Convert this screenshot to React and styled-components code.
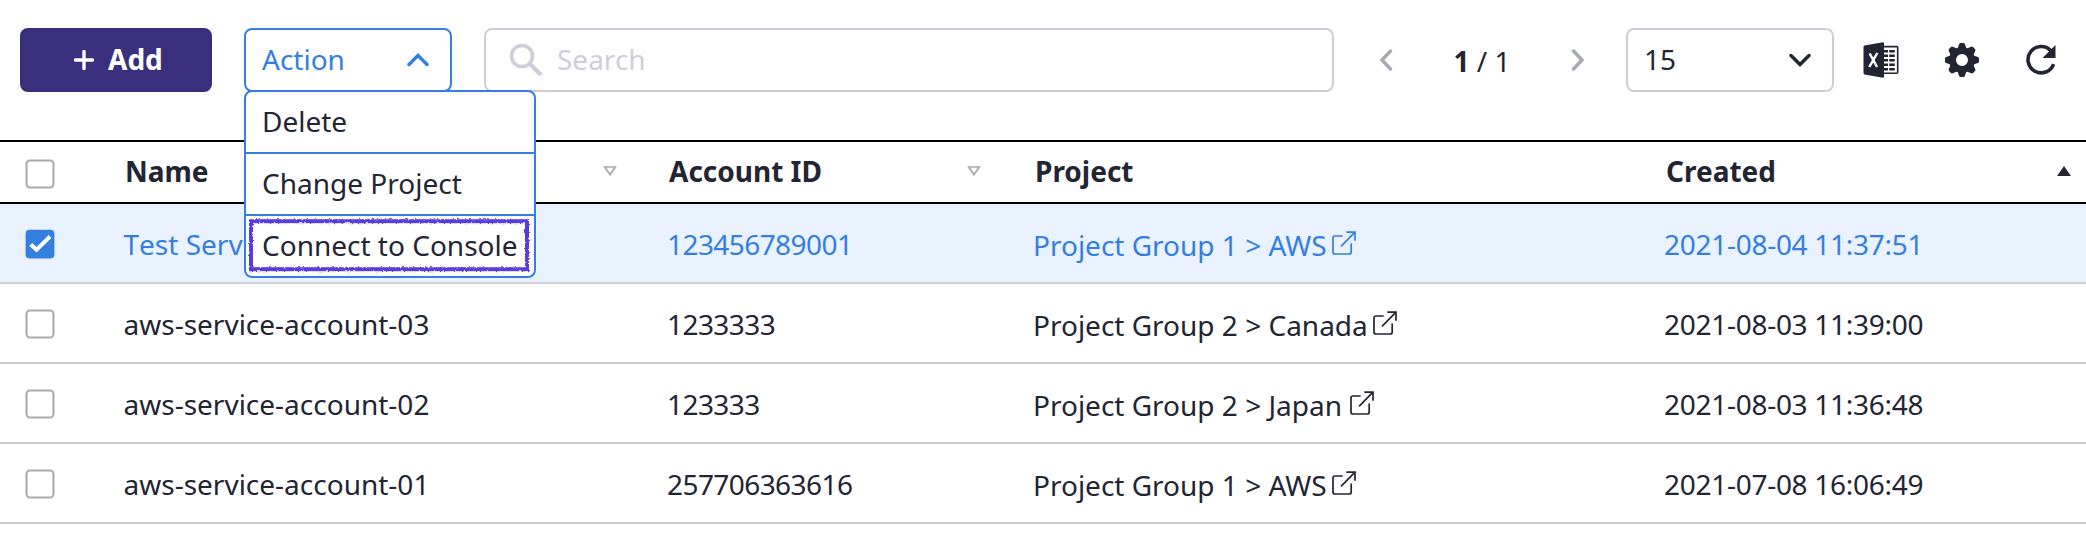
import React from 'react';
import styled, { createGlobalStyle } from 'styled-components';

const GlobalStyle = createGlobalStyle`
  * { box-sizing: border-box; }
  body { margin: 0; background: #fff; }
`;

const Page = styled.div`
  height: 548px;
  overflow: hidden;
  background: #fff;
  color: #232533;
  font: 400 28px/40px 'Noto Sans', sans-serif;
`;

const Toolbar = styled.div`
  height: 140px;
  display: flex;
  align-items: flex-start;
  padding: 28px 29px 0 20px;
`;

const AddButton = styled.button`
  width: 192px;
  height: 64px;
  border: 0;
  border-radius: 8px;
  background: #3a2f7d;
  color: #fff;
  font: 700 28px/40px 'Noto Sans', sans-serif;
  display: flex;
  align-items: center;
  padding: 0 0 2px 54px;
  gap: 14px;
  svg { position: relative; top: 1px; }
`;

const Dropdown = styled.div`
  position: relative;
  margin-left: 32px;
`;

const Field = styled.div`
  width: ${(p) => p.$width}px;
  height: 64px;
  border: 2px solid ${(p) => (p.$open ? '#347fe0' : '#cfced8')};
  border-radius: 8px;
  background: #fff;
  color: ${(p) => (p.$open ? '#347fe0' : '#232533')};
  display: flex;
  align-items: center;
  justify-content: space-between;
  padding: 0 21px 2px 16px;
  svg { position: relative; top: 1px; }
`;

const Menu = styled.ul`
  position: absolute;
  z-index: 2;
  top: 62px;
  left: 0;
  width: 292px;
  height: 188px;
  margin: 0;
  padding: 0;
  list-style: none;
  background: #fff;
  border: 2px solid #347fe0;
  border-radius: 8px;
  color: #232533;
`;

const MenuItem = styled.li`
  position: relative;
  height: 60px;
  padding: 9px 0 0 16px;
  white-space: nowrap;
  & + & {
    height: 62px;
    border-top: 2px solid #347fe0;
  }
`;

const Scribble = styled.svg`
  position: absolute;
  left: 2px;
  top: 2px;
`;

const SearchBox = styled.div`
  width: 850px;
  height: 64px;
  margin-left: 32px;
  border: 2px solid #cfced8;
  border-radius: 8px;
  color: #cfced8;
  display: flex;
  align-items: center;
  gap: 14px;
  padding: 0 0 2px 23px;
  svg { position: relative; top: 1px; }
`;

const Pager = styled.div`
  height: 64px;
  width: 206px;
  margin: 0 41px 0 45px;
  display: flex;
  align-items: center;
  justify-content: space-between;
  color: #a6a9b2;
`;

const PageCount = styled.span`
  color: #232533;
  padding-top: 2px;
`;

const Tools = styled.div`
  height: 64px;
  flex: 1;
  display: flex;
  align-items: center;
  justify-content: space-between;
  padding-left: 29px;
`;

const columns = '123px 544px 366px 631px 1fr';

const HeadRow = styled.div`
  display: grid;
  grid-template-columns: ${columns};
  height: 64px;
  border-top: 2px solid #000;
  border-bottom: 2px solid #000;
  font-weight: 700;
`;

const HeadCell = styled.div`
  display: flex;
  align-items: center;
  justify-content: space-between;
  padding: 0 ${(p) => p.$right}px 2px 2px;
`;

const BodyRow = styled.div`
  display: grid;
  grid-template-columns: ${columns};
  height: 80px;
  border-bottom: 2px solid #cfced8;
  background: ${(p) => (p.$selected ? '#eaf2ff' : '#fff')};
  color: ${(p) => (p.$selected ? '#347fe0' : '#232533')};
`;

const Cell = styled.div`
  display: flex;
  align-items: center;
  padding-top: ${(p) => (p.$low ? 4 : 2)}px;
  letter-spacing: ${(p) => p.$tracking || 0}px;
  white-space: pre;
`;

const NameCell = styled(Cell)`
  padding-left: 0.5px;
  font-kerning: none;
`;

const CheckCell = styled.div`
  display: flex;
  align-items: center;
  padding: ${(p) => p.$top}px 0 0 25px;
`;

function Checkbox({ checked }) {
  return (
    <svg width="30" height="30" viewBox="0 0 30 30" fill="none">
      {checked ? (
        <>
          <rect x=".6" y=".8" width="28.8" height="28.8" rx="4" fill="#347fe0" />
          <path d="M5.8 15.5 11.5 20.8 25 7.5" stroke="#fff" strokeWidth="4" />
        </>
      ) : (
        <rect x="1.5" y="1.5" width="27" height="27" rx="3.5" stroke="#a6a9b2" strokeWidth="2" fill="#fff" />
      )}
    </svg>
  );
}

function Chevron({ direction }) {
  const shape = {
    up: [22, 14, 'M2 11.5 11 2.5 20 11.5'],
    down: [22, 14, 'M2 2.5 11 11.5 20 2.5'],
    left: [14, 22, 'M11.5 2 3 11 11.5 20'],
    right: [14, 22, 'M2.5 2 11 11 2.5 20'],
  }[direction];
  return (
    <svg width={shape[0]} height={shape[1]} fill="none">
      <path d={shape[2]} stroke="currentColor" strokeWidth="3.4" strokeLinecap="round" />
    </svg>
  );
}

function SortIcon({ active }) {
  return active ? (
    <svg width="14" height="10"><path d="M7 0 14 10H0Z" fill="#232533" /></svg>
  ) : (
    <svg width="14" height="10" fill="none"><path d="M1.6 1H12.4L7 8.6Z" stroke="#a6a9b2" strokeWidth="1.7" /></svg>
  );
}

const LinkSvg = styled.svg`
  position: relative;
  top: -2px;
  margin-left: ${(p) => p.$gap}px;
`;

function ExternalLink({ gap = 5.5 }) {
  return (
    <LinkSvg $gap={gap} width="24" height="24" fill="none" stroke="currentColor" strokeWidth="1.7">
      <path d="M10 5H3Q1 5 1 7V21Q1 23 3 23H17.2Q19.2 23 19.2 21V13" strokeLinecap="round" />
      <path d="M14.3 1.2H23V9.8M23 1.2 9 15.4" />
    </LinkSvg>
  );
}

function Outline() {
  return (
    <Scribble width="282" height="56" fill="none">
      <defs>
        <filter id="rough" x="-2%" y="-8%" width="104%" height="116%">
          <feTurbulence type="fractalNoise" baseFrequency="0.5" numOctaves="2" seed="4" />
          <feDisplacementMap in="SourceGraphic" scale="3" xChannelSelector="R" yChannelSelector="G" />
        </filter>
      </defs>
      <rect x="3" y="3.2" width="276" height="48" stroke="#5a3be0" strokeWidth="4" filter="url(#rough)" />
    </Scribble>
  );
}

function ExcelIcon() {
  return (
    <svg width="36" height="36" viewBox="0 0 36 36" fill="none">
      <rect x="20" y="4.6" width="14.7" height="26.6" rx="1" stroke="#232533" strokeWidth="1.6" />
      <path d="M21 9.2h4M21 13.8h4M21 18.2h4M21 22.8h4M21 27.2h4M26.2 9.2h5.6M26.2 13.8h5.6M26.2 18.2h5.6M26.2 22.8h5.6M26.2 27.2h5.6" stroke="#232533" strokeWidth="2.6" />
      <path d="M1.5 3.6 20 .3Q21 .3 21 1.3V34.7Q21 35.7 20 35.7L1.5 32.4Q.5 32 .5 31V5Q.5 4 1.5 3.6Z" fill="#232533" />
      <path d="M6.7 11.5 14 25M14.3 11 6.3 25" stroke="#fff" strokeWidth="2.5" />
    </svg>
  );
}

function GearIcon() {
  const teeth = [0, 45, 90, 135, 180, 225, 270, 315];
  return (
    <svg width="34" height="34" viewBox="-17 -17 34 34" fill="#232533">
      <circle r="9.4" fill="none" stroke="#232533" strokeWidth="6.8" />
      {teeth.map((a) => (
        <path key={a} d="M-4.8 -11 -2.9 -15.8Q-2.4 -17 -1.4 -17H1.4Q2.4 -17 2.9 -15.8L4.8 -11Z" transform={`rotate(${a})`} />
      ))}
    </svg>
  );
}

function RefreshIcon() {
  return (
    <svg width="32" height="32" viewBox="0 0 32 32" fill="none">
      <path d="M28.6 20.2A13.2 13.2 0 1 1 25.6 6.4" stroke="#232533" strokeWidth="3.6" />
      <path d="M30.5 1V14H17.5Z" fill="#232533" />
    </svg>
  );
}

const rows = [
  { name: 'Test Servi', account: '123456789001', project: 'Project Group 1 > AWS', created: '2021-08-04 11:37:51', selected: true },
  { name: 'aws-service-account-03', account: '1233333', project: 'Project Group 2 > Canada', created: '2021-08-03 11:39:00' },
  { name: 'aws-service-account-02', account: '123333', project: 'Project Group 2 > Japan', created: '2021-08-03 11:36:48', gap: 7.5 },
  { name: 'aws-service-account-01', account: '257706363616', project: 'Project Group 1 > AWS', created: '2021-07-08 16:06:49' },
];

export default function App() {
  return (
    <Page>
      <GlobalStyle />
      <Toolbar>
        <AddButton>
          <svg width="20" height="20"><path d="M10 1.5V18.5M1.5 10H18.5" stroke="#fff" strokeWidth="3.4" strokeLinecap="round" /></svg>
          Add
        </AddButton>
        <Dropdown>
          <Field $width={208} $open>
            Action
            <Chevron direction="up" />
          </Field>
          <Menu>
            <MenuItem>Delete</MenuItem>
            <MenuItem>Change Project</MenuItem>
            <MenuItem><Outline />Connect to Console</MenuItem>
          </Menu>
        </Dropdown>
        <SearchBox>
          <svg width="34" height="34" fill="none" stroke="#cfced8">
            <circle cx="13" cy="13" r="10.5" strokeWidth="3.6" />
            <path d="M20.5 20.5 32 32" strokeWidth="4.2" />
          </svg>
          Search
        </SearchBox>
        <Pager>
          <Chevron direction="left" />
          <PageCount><b>1</b> / 1</PageCount>
          <Chevron direction="right" />
        </Pager>
        <Field $width={208}>
          15
          <Chevron direction="down" />
        </Field>
        <Tools>
          <ExcelIcon />
          <GearIcon />
          <RefreshIcon />
        </Tools>
      </Toolbar>
      <HeadRow>
        <CheckCell $top={4}><Checkbox /></CheckCell>
        <HeadCell $right={50}>Name<SortIcon /></HeadCell>
        <HeadCell $right={52}>Account ID<SortIcon /></HeadCell>
        <HeadCell $right={0}>Project</HeadCell>
        <HeadCell $right={15}>Created<SortIcon active /></HeadCell>
      </HeadRow>
      {rows.map(({ name, account, project, created, selected, gap }) => (
        <BodyRow key={name} $selected={selected}>
          <CheckCell $top={2}><Checkbox checked={selected} /></CheckCell>
          <NameCell>{name}</NameCell>
          <Cell $tracking={-0.57}>{account}</Cell>
          <Cell $low>{project}<ExternalLink gap={gap} /></Cell>
          <Cell $tracking={-0.28}>{created}</Cell>
        </BodyRow>
      ))}
    </Page>
  );
}
